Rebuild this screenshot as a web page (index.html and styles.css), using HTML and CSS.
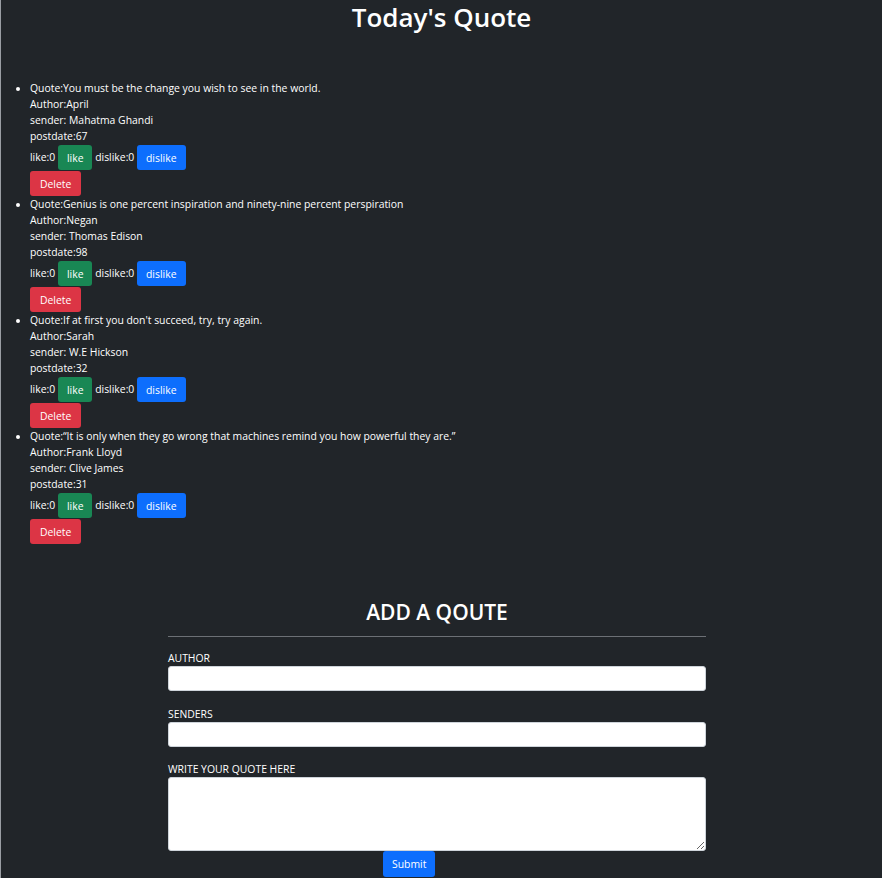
FILE: index.html
```html
<!DOCTYPE html>
<html lang="en">
<head>
<meta charset="utf-8">
<title>Today's Quote</title>
<link rel="stylesheet" href="styles.css">
</head>
<body>
<div class="page">
  <h1 class="title">Today's Quote</h1>
  <ul class="quotes">
    <li class="quote">
      <div>Quote:You must be the change you wish to see in the world.</div>
      <div>Author:April</div>
      <div>sender: Mahatma Ghandi</div>
      <div>postdate:67</div>
      <div class="votes">like:0 <button class="btn btn-green">like</button> dislike:0 <button class="btn btn-blue">dislike</button></div>
      <div class="del"><button class="btn btn-red">Delete</button></div>
    </li>
    <li class="quote">
      <div>Quote:Genius is one percent inspiration and ninety-nine percent perspiration</div>
      <div>Author:Negan</div>
      <div>sender: Thomas Edison</div>
      <div>postdate:98</div>
      <div class="votes">like:0 <button class="btn btn-green">like</button> dislike:0 <button class="btn btn-blue">dislike</button></div>
      <div class="del"><button class="btn btn-red">Delete</button></div>
    </li>
    <li class="quote">
      <div>Quote:If at first you don't succeed, try, try again.</div>
      <div>Author:Sarah</div>
      <div>sender: W.E Hickson</div>
      <div>postdate:32</div>
      <div class="votes">like:0 <button class="btn btn-green">like</button> dislike:0 <button class="btn btn-blue">dislike</button></div>
      <div class="del"><button class="btn btn-red">Delete</button></div>
    </li>
    <li class="quote">
      <div>Quote:“It is only when they go wrong that machines remind you how powerful they are.”</div>
      <div>Author:Frank Lloyd</div>
      <div>sender: Clive James</div>
      <div>postdate:31</div>
      <div class="votes">like:0 <button class="btn btn-green">like</button> dislike:0 <button class="btn btn-blue">dislike</button></div>
      <div class="del"><button class="btn btn-red">Delete</button></div>
    </li>
  </ul>

  <form class="add-form">
    <h2 class="form-title">ADD A QOUTE</h2>
    <hr class="rule">
    <label class="field-label" for="author">AUTHOR</label>
    <input class="field" id="author" type="text">
    <label class="field-label" for="sender">SENDERS</label>
    <input class="field field-tight" id="sender" type="text">
    <label class="field-label" for="quote">WRITE YOUR QUOTE HERE</label>
    <textarea class="field area" id="quote"></textarea>
    <div class="submit-row"><button type="button" class="btn btn-blue submit">Submit</button></div>
  </form>
</div>
</body>
</html>
```

FILE: styles.css
```css
html, body {
  margin: 0;
  padding: 0;
  background: #212529;
}
body {
  font-family: "Open Sans", "Noto Sans", sans-serif;
  color: #ffffff;
  font-size: 10.4px;
  line-height: 16px;
}
.page {
  border-left: 1px solid #9a9ea3;
  min-height: 878px;
  box-sizing: border-box;
}
.title {
  margin: 0;
  text-align: center;
  font-size: 26px;
  font-weight: 600;
  line-height: 34px;
}
.quotes {
  margin: 46px 0 0 0;
  padding-left: 29px;
}
.quote {
  list-style: disc;
}
.votes {
  height: 26px;
  line-height: 26px;
}
.del {
  height: 26px;
  line-height: 26px;
}
.btn {
  font-family: inherit;
  font-size: 10.4px;
  color: #ffffff;
  border: 0;
  border-radius: 3px;
  height: 25px;
  padding: 0 9px;
  vertical-align: top;
  margin: 1px 0 0 0;
}
.btn-green { background: #198754; }
.btn-blue { background: #0d6efd; }
.btn-red { background: #dc3545; padding: 0 10px; }

.add-form {
  width: 538px;
  margin: 53px 0 0 167px;
}
.form-title {
  margin: 0;
  text-align: center;
  font-size: 21px;
  font-weight: 600;
  line-height: 30px;
}
.rule {
  margin: 9px 0 13px 0;
  border: 0;
  border-top: 1px solid #6c7075;
}
.field-label {
  display: block;
  line-height: 16px;
}
.field {
  display: block;
  box-sizing: border-box;
  width: 100%;
  height: 25px;
  margin: 0 0 15px 0;
  border: 1px solid #ced4da;
  border-radius: 3px;
  background: #ffffff;
}
.field-tight {
  margin-bottom: 14px;
}
.area {
  height: 74px;
  margin-bottom: 0;
  resize: vertical;
}
.submit-row {
  padding-left: 215px;
}
.submit {
  height: 26px;
  margin: 0;
}
```
